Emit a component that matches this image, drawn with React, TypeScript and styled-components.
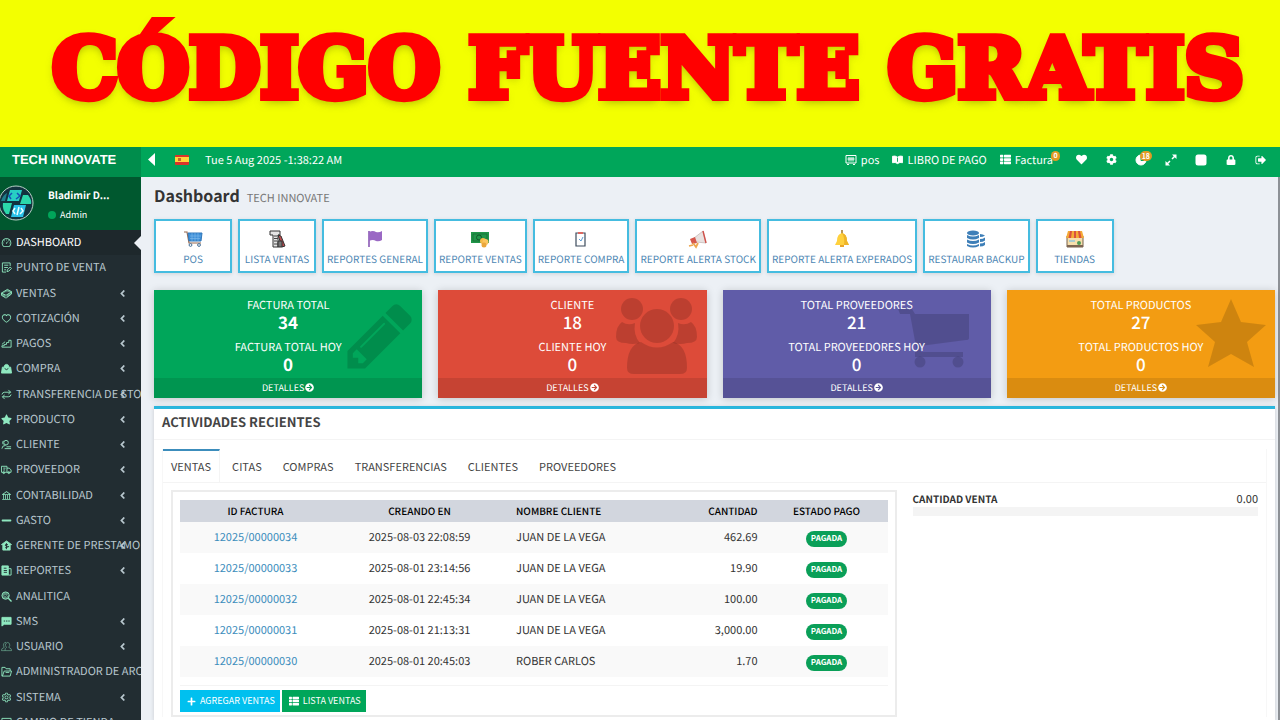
import React from "react";
import styled, { createGlobalStyle } from "styled-components";
import {
  FaAngleLeft,
  FaArrowCircleRight,
  FaCog,
  FaHeart,
  FaLock,
  FaMinus,
  FaPlus,
  FaStar,
  FaThList,
} from "react-icons/fa";
import { AiOutlineBank, AiOutlineDashboard, AiOutlineHeart, AiOutlineSetting } from "react-icons/ai";

const GlobalStyle = createGlobalStyle`
  *, *::before, *::after { box-sizing: border-box; }
  body {
    margin: 0;
    overflow: hidden;
    background: #ecf0f5;
    color: #333;
    font-family: "Noto Sans CJK SC", "Noto Sans", sans-serif;
    font-size: 11px;
    line-height: 16px;
    text-rendering: geometricPrecision;
  }
  h1, h2, p, ul { margin: 0; padding: 0; }
  ul { list-style: none; }
  a { color: inherit; text-decoration: none; }
  button { font: inherit; border: 0; margin: 0; padding: 0; background: none; color: inherit; cursor: pointer; }
  svg { display: block; flex: none; }
`;

const Page = styled.div`
  display: flex;
  flex-direction: column;
  height: 100vh;
  overflow: hidden;
`;

const Banner = styled.header`
  flex: none;
  display: flex;
  align-items: center;
  justify-content: center;
  height: 147px;
  padding-bottom: 9px;
  padding-left: 16px;
  background: #f3ff00;
`;

const BannerTitle = styled.h1`
  color: #ff0000;
  font-family: "DejaVu Serif", serif;
  font-weight: bold;
  font-size: 82px;
  line-height: 100px;
  white-space: nowrap;
  -webkit-text-stroke: 8px #ff0000;
  text-shadow: 0 4px 10px rgba(90, 90, 0, 0.6);
`;

const Shell = styled.div`
  flex: 1;
  min-height: 0;
  display: flex;
`;

const Sidebar = styled.aside`
  flex: none;
  width: 141px;
  overflow: hidden;
  background: #222d32;
`;

const Brand = styled.a`
  display: flex;
  align-items: center;
  height: 30px;
  padding: 0 12px 4px;
  background: #008d4c;
  color: #fff;
  font: bold 13px/20px "Liberation Sans", Arial, sans-serif;
  white-space: nowrap;
`;

const UserPanel = styled.div`
  display: flex;
  gap: 14px;
  height: 53px;
  padding-top: 8px;
  background: #00582f;
  color: #fff;
`;

const UserText = styled.div`
  display: flex;
  flex-direction: column;
  gap: 4px;
  padding-top: 2px;
`;

const UserName = styled.strong`
  font-size: 10px;
  line-height: 16px;
`;

const UserRole = styled.span`
  display: flex;
  align-items: center;
  gap: 4px;
  font-size: 9px;
`;

const Dot = styled.i`
  width: 8px;
  height: 8px;
  border-radius: 50%;
  background: #00a65a;
`;

const Menu = styled.ul`
  display: grid;
  grid-template-columns: minmax(0, 1fr);
  grid-auto-rows: 1fr;
  height: 505px;
`;

const MenuLink = styled.a<{ $active?: boolean }>`
  position: relative;
  display: flex;
  align-items: center;
  gap: 4px;
  height: 100%;
  padding-left: 1px;
  background: ${(p) => (p.$active ? "#1e282c" : "transparent")};
  color: ${(p) => (p.$active ? "#fff" : "#b8c7ce")};
  line-height: 15px;
  white-space: nowrap;
  > svg { color: #8fe8c0; }
`;

const Chevron = styled.span`
  position: absolute;
  right: 13px;
`;

const ActiveNotch = styled.span`
  position: absolute;
  right: 0;
  border: 7px solid transparent;
  border-left: 0;
  border-right-color: #ecf0f5;
`;

const Main = styled.div`
  flex: 1;
  min-width: 0;
  display: flex;
  flex-direction: column;
`;

const Topbar = styled.div`
  flex: none;
  display: flex;
  align-items: center;
  height: 30px;
  padding: 0 4px 5px 7px;
  background: #00a65a;
  color: #fff;
`;

const TopLeft = styled.div`
  flex: 1;
  display: flex;
  align-items: center;
`;

const Toggle = styled.button`
  margin-right: 20px;
`;

const Clock = styled.time`
  margin-left: 16px;
`;

const TopLink = styled.a`
  position: relative;
  display: flex;
  align-items: center;
  gap: 4px;
  margin-right: 13px;
`;

const TopButton = styled.button`
  position: relative;
  display: flex;
  align-items: center;
  justify-content: center;
  width: 30px;
  height: 24px;
`;

const Badge = styled.span<{ $wide?: boolean }>`
  position: absolute;
  top: ${(p) => (p.$wide ? "3px" : "-1px")};
  right: ${(p) => (p.$wide ? "4px" : "-7px")};
  min-width: 9px;
  padding: 0 2px;
  border-radius: 5px;
  background: #e09b23;
  font-size: 7px;
  font-weight: bold;
  line-height: 10px;
  text-align: center;
`;

const Body = styled.main`
  flex: 1;
  min-height: 0;
  display: flex;
  flex-direction: column;
  padding: 8px 3px 0 13px;
  border-right: 2px solid #8d9196;
`;

const PageHeading = styled.div`
  display: flex;
  align-items: baseline;
  gap: 7px;
  height: 34px;
  color: #777;
`;

const PageTitle = styled.h2`
  color: #333;
  font-size: 16px;
  font-weight: 700;
  line-height: 20px;
`;

const Tiles = styled.nav`
  display: flex;
  gap: 6px;
  margin-bottom: 17px;
`;

const Tile = styled.a`
  display: flex;
  flex-direction: column;
  align-items: center;
  gap: 2px;
  min-width: 78px;
  height: 54px;
  padding: 8px 3px 0;
  border: 2px solid #45bce0;
  background: #fff;
  box-shadow: 0 1px 4px rgba(0, 0, 0, 0.12);
  color: #4c86b3;
  font-size: 10px;
  white-space: nowrap;
`;

const Stats = styled.section`
  display: grid;
  grid-template-columns: repeat(4, 1fr);
  gap: 16px;
  margin-bottom: 8px;
`;

const StatLabel = styled.p`
  position: relative;
  font-size: 11px;
  line-height: 18px;
`;

const StatValue = styled.p<{ $bold?: boolean }>`
  position: relative;
  font-size: 17px;
  font-weight: ${(p) => (p.$bold ? 700 : 500)};
  line-height: 16px;
  & + ${StatLabel} { margin-top: 8px; }
`;

const StatCard = styled.article<{ $color: string }>`
  position: relative;
  display: flex;
  flex-direction: column;
  height: 108px;
  padding-top: 6px;
  background: ${(p) => p.$color};
  box-shadow: 0 1px 8px rgba(0, 0, 0, 0.18);
  color: #fff;
  text-align: center;
`;

const StatLink = styled.a`
  position: relative;
  flex: none;
  display: flex;
  align-items: center;
  justify-content: center;
  gap: 1px;
  height: 20px;
  margin-top: auto;
  padding-bottom: 1px;
  background: rgba(0, 0, 0, 0.1);
  font-size: 9px;
`;

const StatArt = styled.span<{ $top: number; $right: number }>`
  position: absolute;
  top: ${(p) => p.$top}px;
  right: ${(p) => p.$right}px;
  color: rgba(0, 0, 0, 0.15);
`;

const Box = styled.section`
  flex: 1;
  min-height: 0;
  border-top: 3px solid #29b6dd;
  background: #fff;
  box-shadow: 0 1px 4px rgba(0, 0, 0, 0.15);
`;

const BoxTitle = styled.h2`
  padding: 4px 8px 8px;
  border-bottom: 1px solid #f4f4f4;
  color: #444;
  font-size: 13px;
  font-weight: 700;
  line-height: 18px;
`;

const TabPanel = styled.div`
  margin: 9px 8px 0;
  border: solid #f7f7f7;
  border-width: 0 1px;
`;

const TabList = styled.div`
  display: flex;
  height: 34px;
  border-bottom: 1px solid #f4f4f4;
`;

const Tab = styled.button<{ $active?: boolean }>`
  padding: 0 8px 2px;
  margin-right: 4px;
  border-top: 2px solid ${(p) => (p.$active ? "#3c8dbc" : "transparent")};
  border-right: 1px solid ${(p) => (p.$active ? "#f4f4f4" : "transparent")};
  color: #444;
`;

const Columns = styled.div`
  display: grid;
  grid-template-columns: 21fr 10fr;
  gap: 16px;
  padding: 7px 8px 0;
`;

const TableBox = styled.div`
  padding: 8px 7px 3px;
  border: 2px solid #ececec;
`;

const Table = styled.table`
  width: 100%;
  border-collapse: collapse;
  table-layout: fixed;
`;

const Th = styled.th<{ $align?: string; $width?: number }>`
  width: ${(p) => (p.$width ? `${p.$width}px` : "auto")};
  height: 22px;
  padding: 0 8px;
  background: #d2d6de;
  color: #000;
  font-size: 10px;
  font-weight: 500;
  text-align: ${(p) => p.$align ?? "center"};
`;

const Row = styled.tr`
  &:nth-child(odd) { background: #f9f9f9; }
`;

const Td = styled.td<{ $align?: string }>`
  height: 31px;
  padding: 0 8px 1px;
  text-align: ${(p) => p.$align ?? "center"};
  a { color: #3c8dbc; }
`;

const Status = styled.span`
  display: block;
  width: max-content;
  margin: 3px auto 0;
  padding: 0 5px;
  border-radius: 8px;
  background: #0a9f58;
  color: #fff;
  font-size: 8px;
  font-weight: bold;
  line-height: 16px;
`;

const Actions = styled.div`
  display: flex;
  gap: 2px;
  margin-top: 8px;
  padding-top: 4px;
  border-top: 1px solid #f4f4f4;
`;

const ActionButton = styled.button<{ $color: string }>`
  display: flex;
  align-items: center;
  gap: 4px;
  height: 22px;
  padding: 0 5px 0 7px;
  background: ${(p) => p.$color};
  color: #fff;
  font-size: 9px;
`;

const Summary = styled.div`
  padding-top: 1px;
`;

const SummaryRow = styled.div`
  display: flex;
  justify-content: space-between;
  b { font-size: 10px; font-weight: 700; }
`;

const Track = styled.div`
  height: 9px;
  background: #f4f4f4;
`;

/* Drawings */

const Glyph = ({ size = 11, box = 24, children }: { size?: number; box?: number; children: React.ReactNode }) => (
  <svg width={size} height={size} viewBox={`0 0 ${box} ${box}`} fill="none" stroke="currentColor" strokeWidth="2" aria-hidden="true">
    {children}
  </svg>
);

const NoteIcon = () => (
  <Glyph><path d="M20 9V2H3v20h8M7 7h9M7 12h8M7 17h4M13 21l1-4 6-6 3 3-6 6z" /></Glyph>
);
const CashIcon = () => (
  <Glyph>
    <path d="M1 11 14 3l9 5-12 8zM1 11v5l10 6 12-9V8" fill="currentColor" fillOpacity=".55" />
    <path d="M9 11q3-3 6-2M11 16v5" stroke="#222d32" />
  </Glyph>
);
const StairsIcon = () => <Glyph><path d="M2 20h20V5h-5v5h-5v4H7v3H2zM2 14l7-6" /></Glyph>;
const BagIcon = () => (
  <Glyph>
    <path d="M3 9h18l2 13H1zM7 9q0-6 5-6t5 6" fill="currentColor" />
    <path d="M8 12q4 5 8 0" stroke="#222d32" />
  </Glyph>
);
const LoopIcon = () => (
  <Glyph><path d="M2 12q1-5 6-5h13M16 2l5 5-5 4M22 12q-1 5-6 5H3M8 13l-5 4 5 5" /></Glyph>
);
const ClientIcon = () => (
  <Glyph><circle cx="11" cy="8" r="5" /><path d="M2 21q0-7 8-7M8 21h14M12 17h10M5 4q-3 4 0 8" /></Glyph>
);
const TruckIcon = () => (
  <Glyph><path d="M1 5h12v13H1zM13 9h5l4 4v5h-9M5 9h5M5 13h4" /><circle cx="6" cy="19" r="2" /><circle cx="17" cy="19" r="2" /></Glyph>
);
const LoanIcon = () => (
  <Glyph>
    <path d="M12 2 1 10h3v12h16V10h3z" fill="currentColor" />
    <path d="M15 10q-6-2-6 1t6 3-6 3M12 7v13" stroke="#222d32" />
  </Glyph>
);
const ReportIcon = () => (
  <Glyph>
    <path d="M2 2h14v20H2z" fill="currentColor" />
    <path d="M16 8h6v14h-6" />
    <path d="M6 7h6M6 12h7M6 16h7" stroke="#222d32" />
  </Glyph>
);
const AnalyticsIcon = () => (
  <Glyph>
    <circle cx="10" cy="10" r="8" fill="currentColor" fillOpacity=".5" />
    <path d="m16 16 7 7" strokeWidth="3" />
    <path d="M6 12l3-3 3 3 4-5" stroke="#222d32" />
  </Glyph>
);
const SmsIcon = () => (
  <Glyph>
    <path d="M2 3h20v15H7l-5 4z" fill="currentColor" />
    <path d="M6 11h3M11 11h3M16 11h3" stroke="#222d32" />
  </Glyph>
);
const UsersIcon = () => (
  <Glyph>
    <g strokeWidth="1.5" opacity=".65">
      <path d="M9 21H1l1-4 5-3q-3-4-1-8t5-3M9 21h14l-1-4-5-3q4-5 1-9t-7 0 1 9l-3 3z" />
    </g>
  </Glyph>
);
const FolderIcon = () => <Glyph><path d="M2 22V3h7l2 3h9v5M2 22h18l3-11H7L3 22M10 14h8" /></Glyph>;
const StoreIcon = () => <Glyph><path d="M2 3h20v5H2zM4 8v13h16V8M9 21v-7h6v7" /></Glyph>;

const Avatar = () => (
  <svg width="34" height="36" viewBox="0 0 34 36" aria-hidden="true">
    <circle cx="16" cy="18" r="17" fill="#12343f" stroke="#b9d3c8" strokeWidth="1" />
    <path d="M10 5h12l-3 11H7z" fill="#27cfc4" />
    <path d="M23 10h5q4 5 3 9H20z" fill="#2bd8ab" />
    <path d="M7 8 5 16H1Q3 10 7 8z" fill="#1f7f8c" />
    <path d="M3 18h9l-3 11H6Q2 24 3 18z" fill="#2bd8ab" />
    <path d="M14 20h12l-3 12H11z" fill="#29c1e9" />
    <g fill="none" strokeWidth="1.5">
      <path d="m12 8-3 3 2 3M17 8l3 3-4 3" stroke="#1552b5" />
      <path d="m15 23-2 3 2 3M21 23l2 3-3 3M19 22l-2 8" stroke="#e8ffff" />
    </g>
  </svg>
);

const Flag = () => (
  <svg width="14" height="12" viewBox="0 0 14 12" aria-label="Español">
    <rect y="1" width="14" height="10" rx="1" fill="#d9342b" />
    <rect y="3" width="14" height="5" fill="#ffd43b" />
    <rect x="3" y="4" width="3" height="3" fill="#c1692b" />
  </svg>
);

const CaretLeft = () => (
  <svg width="7" height="13" viewBox="0 0 7 13" aria-hidden="true"><path d="M7 0v13L0 6.500z" fill="#fff" /></svg>
);
const RegisterIcon = () => (
  <Glyph size={12}><path d="M2 3h20v15H2zM8 6v9M12 6v9M16 6v9M5 10h14M4 21h4M16 21h4" strokeWidth="2" /></Glyph>
);
const BookIcon = () => (
  <Glyph size={11}><path d="M1 5q6-2 11 2 5-4 11-2v14q-6-2-11 2-5-4-11-2z" fill="currentColor" /><path d="M12 8v9" stroke="#00a65a" /></Glyph>
);
const ClockIcon = () => (
  <Glyph size={12}><circle cx="12" cy="12" r="10" fill="currentColor" /><path d="M12 5v8h6" stroke="#00a65a" /></Glyph>
);
const ExpandIcon = () => (
  <Glyph size={12}><path d="M14 1h9v9zM1 14v9h9z" fill="currentColor" stroke="none" /><path d="m4 20 6-6M14 10l6-6" strokeWidth="3" /></Glyph>
);
const SquareIcon = () => <Glyph size={12}><rect x="1" y="1" width="22" height="22" rx="5" fill="currentColor" stroke="none" /></Glyph>;
const SignOutIcon = () => (
  <svg width="12" height="12" viewBox="0 0 1792 1792" fill="currentColor" aria-hidden="true">
    <path d="M704 1440q0 4 1 20t.5 26.500-3 23.500-10 19.500-20.500 6.500h-320q-119 0-203.500-84.500t-84.500-203.500v-704q0-119 84.500-203.500t203.500-84.500h320q13 0 22.500 9.500t9.500 22.500q0 4 1 20t.5 26.500-3 23.500-10 19.500-20.500 6.500h-320q-66 0-113 47t-47 113v704q0 66 47 113t113 47h312l11.500 1 11.500 3 8 5.500 7 9 2 13.500zm928-544q0 26-19 45l-544 544q-19 19-45 19t-45-19-19-45v-288h-448q-26 0-45-19t-19-45v-384q0-26 19-45t45-19h448v-288q0-26 19-45t45-19 45 19l544 544q19 19 19 45z" />
  </svg>
);

const Art = ({ children }: { children: React.ReactNode }) => (
  <svg width="20" height="20" viewBox="0 0 20 20" fill="none" aria-hidden="true">{children}</svg>
);

const CartArt = () => (
  <Art>
    <path d="M1 3h3l2 11h12" stroke="#98694f" strokeWidth="1.200" />
    <path d="M5 4h14l-1 8H6z" fill="#3d8fd8" stroke="#3177b9" />
    <path d="M7 7h11M7 9.500h10M9 4v8M12 4v8M15 4v8" stroke="#83bcec" strokeWidth=".6" />
    <circle cx="7.500" cy="16" r="1.400" stroke="#477299" /><circle cx="16" cy="16" r="1.400" stroke="#477299" />
  </Art>
);
const InvoiceArt = () => (
  <Art>
    <path d="M3 2h10v4h-2v12H6V6H3z" fill="#e5e5e5" stroke="#333" />
    <path d="M7 7h3M7 9.500h4M7 12h3M7 15h4" stroke="#444" />
    <path d="m11 6 3 1 4 10-3 1z" fill="#bb4b4e" stroke="#333" />
    <path d="M11 12h4v6h-4z" fill="#777" stroke="#333" />
  </Art>
);
const FlagArt = () => (
  <Art>
    <path d="M4 2v16" stroke="#8a58b4" strokeWidth="1.600" />
    <path d="M4 3q4-2 7 0 3 1 6-1v9q-3 2-6 1-3-2-7 0z" fill="#9a68c4" />
  </Art>
);
const MoneyArt = () => (
  <Art>
    <path d="M1 3h18v11H1z" fill="#21964a" />
    <path d="M3 5h14v7H3z" stroke="#146a30" strokeWidth=".7" />
    <circle cx="9" cy="8.500" r="2.500" stroke="#0f5a28" /><circle cx="13" cy="12" r="3" fill="#f5b945" /><circle cx="15.500" cy="13" r="3" fill="#fbc55f" />
    <circle cx="14" cy="16" r="2.500" fill="#eaa63b" />
  </Art>
);
const ClipboardArt = () => (
  <Art>
    <path d="M5 4h9v13H5z" fill="#fff" stroke="#3d4b5c" strokeWidth="1.200" />
    <path d="M7 3h5v2H7z" fill="#dc6660" /><path d="m8 10 2 2 2-4" stroke="#5b9cd5" />
  </Art>
);
const MegaphoneArt = () => (
  <Art>
    <path d="m6 9 9-7 3 12-10-1z" fill="#e8e1df" stroke="#b8aaa7" strokeWidth=".6" />
    <path d="m2 10 5-2 2 6-5 1z" fill="#d6584d" /><path d="m15 2 3 12" stroke="#cf514a" strokeWidth="1.400" />
    <path d="m5 14 3 4 2-4M1 17l4-1" stroke="#eea750" strokeWidth="1.800" />
  </Art>
);
const BellArt = () => (
  <Art>
    <path d="M10 1v4" stroke="#a97d2c" strokeWidth="1.600" />
    <path d="M10 4q5 1 5 8l2 4H3l2-4q0-7 5-8z" fill="#ffd13e" />
    <path d="M10 4q5 1 5 8l2 4h-5q1-7-2-12z" fill="#efb529" /><path d="M8 16h4v2H8z" fill="#e9a52a" />
  </Art>
);
const DatabaseArt = () => (
  <Art>
    <g fill="#3e7fb8">
      <ellipse cx="7" cy="4" rx="6" ry="2.500" />
      <path d="M1 6q6 3 12 0v3q-6 3-12 0zM1 10.500q6 3 12 0v3q-6 3-12 0zM1 15q6 3 12 0v2q-6 3-12 0zM14 5q3 0 5 1.500-2 1.500-5 1.500zM14 10q3 0 5-1.500v3q-2 1.500-5 1.500zM14 14.500q3 0 5-1.500v3q-2 1.500-5 1.500z" />
    </g>
  </Art>
);
const ShopArt = () => (
  <Art>
    <path d="M2 7h16v11H2z" fill="#f6dfac" stroke="#76604b" />
    <path d="M3 2h14l2 7H1z" fill="#f5aa36" />
    <path d="M5 2h2L6 9H3.500zM9 2h2v7H9zM13 2h2l1.500 7H14z" fill="#da5140" />
    <path d="M2 16h16v2H2z" fill="#7d6552" /><path d="M4 11h6v2H4z" fill="#a9cdd0" /><circle cx="14" cy="14" r="2" fill="#4f9c58" />
  </Art>
);

const PencilArt = () => (
  <svg width="76" height="76" viewBox="0 0 1792 1792" fill="currentColor">
    <path d="M491 1536l91-91-235-235-91 91v107h128v128h107zm523-928q0-22-22-22-10 0-17 7l-542 542q-7 7-7 17 0 22 22 22 10 0 17-7l542-542q7-7 7-17zm-54-192l416 416-832 832h-416v-416zm683 96q0 53-37 90l-166 166-416-416 166-165q36-38 90-38 53 0 91 38l235 234q37 39 37 91z" />
  </svg>
);
const PeopleArt = () => (
  <svg width="82" height="78" viewBox="0 0 82 78" fill="currentColor">
    <circle cx="16" cy="12" r="11" /><circle cx="65" cy="12" r="11" />
    <path d="M6 25q6 4 13 1-2 12 5 20-8 2-14 0-10 0-10-6 0-11 6-15zM75 25q-6 4-13 1 2 12-5 20 8 2 14 0 10 0 10-6 0-11-6-15z" />
    <circle cx="41" cy="29" r="17" />
    <path d="M25 45q16 11 32 0 14 3 14 26 0 6-7 6H18q-7 0-7-6 0-23 14-26z" />
  </svg>
);
const ShoppingArt = () => (
  <svg width="72" height="60" viewBox="0 0 72 60" fill="currentColor">
    <path d="M0 0h14l3 5h54v24q0 2-3 2L22 37l1 6h42v5H17v-5h2L12 5H2z" />
    <circle cx="22" cy="53" r="5.500" /><circle cx="60" cy="53" r="5.500" />
  </svg>
);
const BigStarArt = () => (
  <svg width="72" height="72" viewBox="0 0 72 72" fill="currentColor">
    <path d="M36 2 46 25l25 3-19 17 7 25-23-13-23 13 7-25L1 28l25-3z" />
  </svg>
);

/* Data */

const menu: { label: string; icon: React.ReactNode; open?: boolean }[] = [
  { label: "DASHBOARD", icon: <AiOutlineDashboard size={11} /> },
  { label: "PUNTO DE VENTA", icon: <NoteIcon /> },
  { label: "VENTAS", icon: <CashIcon />, open: true },
  { label: "COTIZACIÓN", icon: <AiOutlineHeart size={11} />, open: true },
  { label: "PAGOS", icon: <StairsIcon />, open: true },
  { label: "COMPRA", icon: <BagIcon />, open: true },
  { label: "TRANSFERENCIA DE STOCK", icon: <LoopIcon />, open: true },
  { label: "PRODUCTO", icon: <FaStar size={11} />, open: true },
  { label: "CLIENTE", icon: <ClientIcon />, open: true },
  { label: "PROVEEDOR", icon: <TruckIcon />, open: true },
  { label: "CONTABILIDAD", icon: <AiOutlineBank size={11} />, open: true },
  { label: "GASTO", icon: <FaMinus size={11} />, open: true },
  { label: "GERENTE DE PRESTAMO", icon: <LoanIcon />, open: true },
  { label: "REPORTES", icon: <ReportIcon />, open: true },
  { label: "ANALITICA", icon: <AnalyticsIcon /> },
  { label: "SMS", icon: <SmsIcon />, open: true },
  { label: "USUARIO", icon: <UsersIcon />, open: true },
  { label: "ADMINISTRADOR DE ARCHIVOS", icon: <FolderIcon /> },
  { label: "SISTEMA", icon: <AiOutlineSetting size={11} />, open: true },
  { label: "CAMBIO DE TIENDA", icon: <StoreIcon /> },
];

const tiles = [
  { label: "POS", art: <CartArt /> },
  { label: "LISTA VENTAS", art: <InvoiceArt /> },
  { label: "REPORTES GENERAL", art: <FlagArt /> },
  { label: "REPORTE VENTAS", art: <MoneyArt /> },
  { label: "REPORTE COMPRA", art: <ClipboardArt /> },
  { label: "REPORTE ALERTA STOCK", art: <MegaphoneArt /> },
  { label: "REPORTE ALERTA EXPERADOS", art: <BellArt /> },
  { label: "RESTAURAR BACKUP", art: <DatabaseArt /> },
  { label: "TIENDAS", art: <ShopArt /> },
];

const stats = [
  { label: "FACTURA TOTAL", value: "34", today: "FACTURA TOTAL HOY", color: "#00a65a", art: <PencilArt />, top: 8, right: 4, bold: true },
  { label: "CLIENTE", value: "18", today: "CLIENTE HOY", color: "#dd4b39", art: <PeopleArt />, top: 7, right: 9 },
  { label: "TOTAL PROVEEDORES", value: "21", today: "TOTAL PROVEEDORES HOY", color: "#605ca8", art: <ShoppingArt />, top: 19, right: 21 },
  { label: "TOTAL PRODUCTOS", value: "27", today: "TOTAL PRODUCTOS HOY", color: "#f39c12", art: <BigStarArt />, top: 7, right: 8 },
];

const tabs = ["VENTAS", "CITAS", "COMPRAS", "TRANSFERENCIAS", "CLIENTES", "PROVEEDORES"];

const sales = [
  ["12025/00000034", "2025-08-03 22:08:59", "JUAN DE LA VEGA", "462.69"],
  ["12025/00000033", "2025-08-01 23:14:56", "JUAN DE LA VEGA", "19.90"],
  ["12025/00000032", "2025-08-01 22:45:34", "JUAN DE LA VEGA", "100.00"],
  ["12025/00000031", "2025-08-01 21:13:31", "JUAN DE LA VEGA", "3,000.00"],
  ["12025/00000030", "2025-08-01 20:45:03", "ROBER CARLOS", "1.70"],
];

export default function App() {
  return (
    <Page>
      <GlobalStyle />
      <Banner>
        <BannerTitle>CÓDIGO FUENTE GRATIS</BannerTitle>
      </Banner>
      <Shell>
        <Sidebar>
          <Brand href="#">TECH INNOVATE</Brand>
          <UserPanel>
            <Avatar />
            <UserText>
              <UserName>Bladimir D...</UserName>
              <UserRole><Dot />Admin</UserRole>
            </UserText>
          </UserPanel>
          <Menu>
            {menu.map((item, i) => (
              <li key={item.label}>
                <MenuLink href="#" $active={i === 0}>
                  {item.icon}
                  {item.label}
                  {item.open && <Chevron><FaAngleLeft size={11} /></Chevron>}
                  {i === 0 && <ActiveNotch />}
                </MenuLink>
              </li>
            ))}
          </Menu>
        </Sidebar>
        <Main>
          <Topbar>
            <TopLeft>
              <Toggle aria-label="Menú"><CaretLeft /></Toggle>
              <Flag />
              <Clock>Tue 5 Aug 2025 -1:38:22 AM</Clock>
            </TopLeft>
            <TopLink href="#"><RegisterIcon />pos</TopLink>
            <TopLink href="#"><BookIcon />LIBRO DE PAGO</TopLink>
            <TopLink href="#"><FaThList size={11} />Factura<Badge>0</Badge></TopLink>
            <TopButton aria-label="Favoritos"><FaHeart size={11} /></TopButton>
            <TopButton aria-label="Ajustes"><FaCog size={11} /></TopButton>
            <TopButton aria-label="Alertas"><ClockIcon /><Badge $wide>18</Badge></TopButton>
            <TopButton aria-label="Pantalla completa"><ExpandIcon /></TopButton>
            <TopButton aria-label="Panel"><SquareIcon /></TopButton>
            <TopButton aria-label="Bloquear"><FaLock size={10} /></TopButton>
            <TopButton aria-label="Salir"><SignOutIcon /></TopButton>
          </Topbar>
          <Body>
            <PageHeading>
              <PageTitle>Dashboard</PageTitle>
              <span>TECH INNOVATE</span>
            </PageHeading>
            <Tiles>
              {tiles.map((t) => (
                <Tile href="#" key={t.label}>{t.art}{t.label}</Tile>
              ))}
            </Tiles>
            <Stats>
              {stats.map((s) => (
                <StatCard key={s.label} $color={s.color}>
                  <StatArt $top={s.top} $right={s.right}>{s.art}</StatArt>
                  <StatLabel>{s.label}</StatLabel>
                  <StatValue $bold={s.bold}>{s.value}</StatValue>
                  <StatLabel>{s.today}</StatLabel>
                  <StatValue $bold={s.bold}>0</StatValue>
                  <StatLink href="#">DETALLES<FaArrowCircleRight size={9} /></StatLink>
                </StatCard>
              ))}
            </Stats>
            <Box>
              <BoxTitle>ACTIVIDADES RECIENTES</BoxTitle>
              <TabPanel>
                <TabList role="tablist">
                  {tabs.map((t, i) => (
                    <Tab key={t} role="tab" aria-selected={i === 0} $active={i === 0}>{t}</Tab>
                  ))}
                </TabList>
                <Columns>
                  <TableBox>
                    <Table>
                      <thead>
                        <tr>
                          <Th $width={151}>ID FACTURA</Th>
                          <Th $width={177}>CREANDO EN</Th>
                          <Th $align="left">NOMBRE CLIENTE</Th>
                          <Th $align="right">CANTIDAD</Th>
                          <Th $width={122}>ESTADO PAGO</Th>
                        </tr>
                      </thead>
                      <tbody>
                        {sales.map(([id, date, client, amount]) => (
                          <Row key={id}>
                            <Td><a href="#">{id}</a></Td>
                            <Td>{date}</Td>
                            <Td $align="left">{client}</Td>
                            <Td $align="right">{amount}</Td>
                            <Td><Status>PAGADA</Status></Td>
                          </Row>
                        ))}
                      </tbody>
                    </Table>
                    <Actions>
                      <ActionButton $color="#00c0ef"><FaPlus size={9} />AGREGAR VENTAS</ActionButton>
                      <ActionButton $color="#00a65a"><FaThList size={10} />LISTA VENTAS</ActionButton>
                    </Actions>
                  </TableBox>
                  <Summary>
                    <SummaryRow><b>CANTIDAD VENTA</b><span>0.00</span></SummaryRow>
                    <Track />
                  </Summary>
                </Columns>
              </TabPanel>
            </Box>
          </Body>
        </Main>
      </Shell>
    </Page>
  );
}
